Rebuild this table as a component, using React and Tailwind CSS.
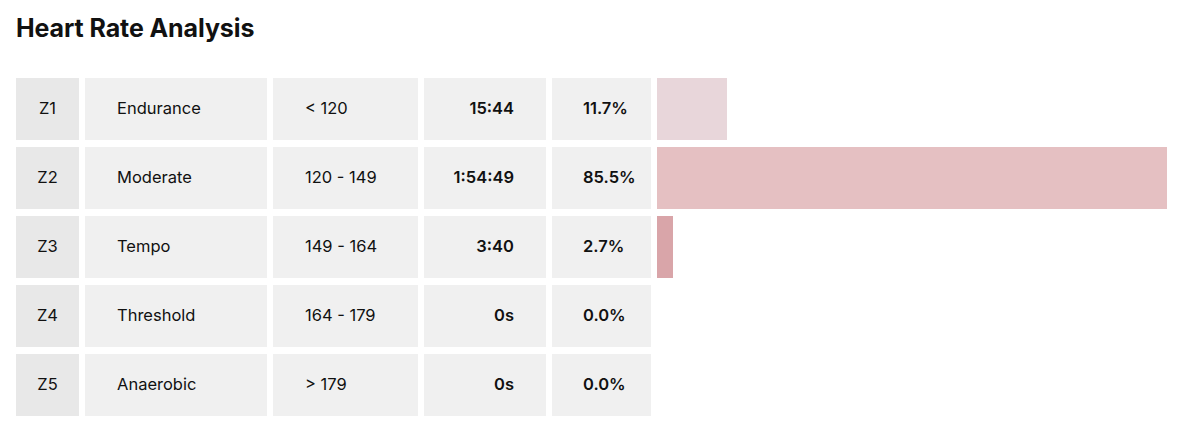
import React from "react";

const rows = [
  { z: "Z1", name: "Endurance", range: "< 120", time: "15:44", pct: "11.7%", w: 70, color: "bg-[#e8d6da]" },
  { z: "Z2", name: "Moderate", range: "120 - 149", time: "1:54:49", pct: "85.5%", w: 510, color: "bg-[#e5c0c2]" },
  { z: "Z3", name: "Tempo", range: "149 - 164", time: "3:40", pct: "2.7%", w: 16, color: "bg-[#d9a5a9]" },
  { z: "Z4", name: "Threshold", range: "164 - 179", time: "0s", pct: "0.0%", w: 0, color: "" },
  { z: "Z5", name: "Anaerobic", range: "> 179", time: "0s", pct: "0.0%", w: 0, color: "" },
];

export default function App() {
  return (
    <div
      className="w-[1200px] h-[428px] bg-white text-[#111] px-4 pt-[12px]"
      style={{ fontFamily: "Inter, 'Noto Sans', sans-serif" }}
    >
      <h1 className="text-[25px] leading-[32px] font-bold tracking-[-0.1px] text-[#111]">
        Heart Rate Analysis
      </h1>
      <div className="mt-[34px] grid grid-cols-[63px_182px_145px_122px_99px_510px] gap-x-[6px] gap-y-[7px] text-[16.5px]">
        {rows.map((r) => (
          <React.Fragment key={r.z}>
            <div className="h-[62px] bg-[#e8e8e8] flex items-center justify-center pb-[2px]">{r.z}</div>
            <div className="h-[62px] bg-[#f0f0f0] flex items-center pl-8 pb-[2px]">{r.name}</div>
            <div className="h-[62px] bg-[#f0f0f0] flex items-center pl-8 pb-[2px]">{r.range}</div>
            <div className="h-[62px] bg-[#f0f0f0] flex items-center justify-end pr-8 pb-[2px] font-semibold">{r.time}</div>
            <div className="h-[62px] bg-[#f0f0f0] flex items-center pl-[31px] pb-[2px] font-semibold">{r.pct}</div>
            <div className="h-[62px] flex items-stretch">
              {r.w > 0 && <div className={`${r.color} h-full`} style={{ width: r.w }} />}
            </div>
          </React.Fragment>
        ))}
      </div>
    </div>
  );
}
